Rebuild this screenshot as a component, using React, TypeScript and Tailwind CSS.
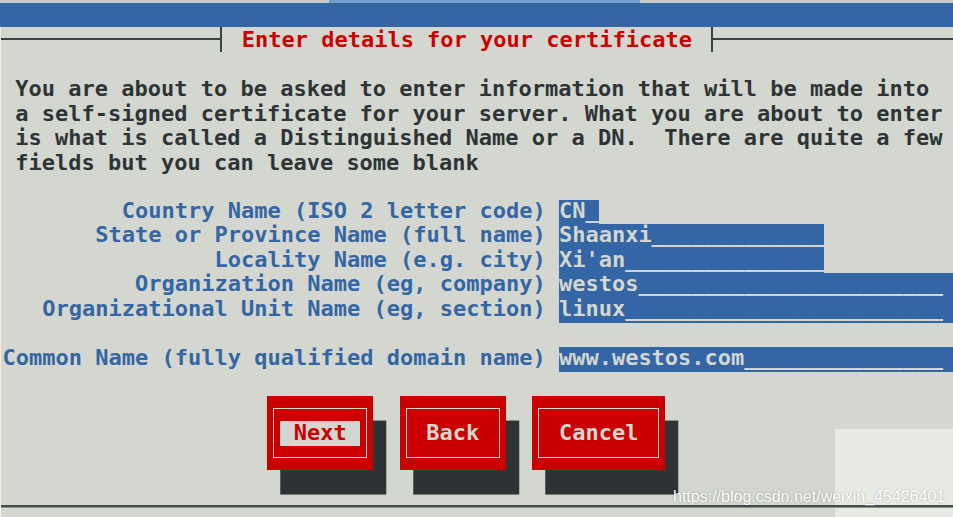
const ROW = "h-[24.55px] leading-[24.55px]";
const FIELD_ROW = "h-[24.55px] pb-[2px] leading-[22.55px]";

const FIELDS = [
  { label: "Country Name (ISO 2 letter code)", value: "CN_", wide: false },
  { label: "State or Province Name (full name)", value: "Shaanxi" + "_".repeat(13), wide: false },
  { label: "Locality Name (e.g. city)", value: "Xi'an" + "_".repeat(15), wide: false },
  { label: "Organization Name (eg, company)", value: "westos" + "_".repeat(23), wide: true },
  { label: "Organizational Unit Name (eg, section)", value: "linux" + "_".repeat(24), wide: true },
];

const INTRO = [
  "You are about to be asked to enter information that will be made into",
  "a self-signed certificate for your server. What you are about to enter",
  "is what is called a Distinguished Name or a DN.  There are quite a few",
  "fields but you can leave some blank",
];

function FieldRow({ label, value, wide }: { label: string; value: string; wide: boolean }) {
  return (
    <div className="flex h-[24.55px] whitespace-pre">
      <span className={`w-[543.66px] shrink-0 text-right text-[#3465a4] ${FIELD_ROW}`}>{label}</span>
      <span
        className={`ml-[13.26px] shrink-0 bg-[#3465a4] text-[#d3d7cf] ${FIELD_ROW} ${wide ? "flex-1" : ""}`}
      >
        {value}
      </span>
    </div>
  );
}

function Button({ label, width, focused }: { label: string; width: string; focused?: boolean }) {
  return (
    <div
      className={`${width} flex h-[73.65px] shrink-0 flex-col bg-[#cc0000] px-[6px] pt-[12px] pb-[11.5px] shadow-[13.26px_24.55px_0_0_#2e3436]`}
    >
      <div className="flex flex-1 items-center justify-center border border-[#d3d7cf]">
        {focused ? (
          <span className={`w-[79.56px] bg-[#d3d7cf] text-center text-[#cc0000] ${ROW}`}>{label}</span>
        ) : (
          <span className={`text-[#d3d7cf] ${ROW}`}>{label}</span>
        )}
      </div>
    </div>
  );
}

export default function App() {
  return (
    <div className="relative h-[517px] w-[953px] overflow-hidden bg-[#d3d7cf] font-['DejaVu_Sans_Mono',monospace] text-[22px] font-bold text-[#2e3436]">
      {/* pale patch behind the watermark */}
      <div className="absolute top-[429px] right-0 bottom-0 left-[835px] bg-[#e8ebe4]" />

      {/* window strip */}
      <div className="h-[3px] bg-[#c8cac5]">
        <div className="ml-[329px] h-full w-[311px] bg-[#729fcf]" />
      </div>
      <div className="h-[24px] bg-[#3465a4]" />

      <div className="border-l border-[#f2f2dc]">
        {/* title */}
        <div className={`flex items-center ${ROW}`}>
          <div className="h-[2px] w-[219px] bg-[#3d4243]" />
          <div className="w-[2px] self-stretch bg-[#3d4243]" />
          <span className="relative top-[1px] ml-[19.7px] w-[450.8px] shrink-0 whitespace-pre text-[#cc0000]">
            Enter details for your certificate
          </span>
          <div className="ml-[18.9px] w-[2px] self-stretch bg-[#3d4243]" />
          <div className="h-[2px] flex-1 bg-[#3d4243]" />
        </div>

        <div className="pl-[1px]">
          <div className="h-[25.55px]" />

          {/* intro */}
          <div className="pl-[13.26px] whitespace-pre">
            {INTRO.map((line) => (
              <div key={line} className={ROW}>
                {line}
              </div>
            ))}
          </div>

          <div className={ROW} />

          {FIELDS.map((f) => (
            <FieldRow key={f.label} label={f.label} value={f.value} wide={f.wide} />
          ))}

          <div className={ROW} />
          <FieldRow
            label="Common Name (fully qualified domain name)"
            value={"www.westos.com" + "_".repeat(15)}
            wide
          />
          <div className={ROW} />

          {/* buttons */}
          <div className="flex gap-[26.52px] pl-[265.2px]">
            <Button label="Next" width="w-[106.08px]" focused />
            <Button label="Back" width="w-[106.08px]" />
            <Button label="Cancel" width="w-[132.6px]" />
          </div>

          <div className={ROW} />
        </div>

        {/* bottom rule */}
        <div className={`relative flex items-center ${ROW}`}>
          <div className="h-[3px] w-full border-b border-[#8d918d] bg-[#474c4c]" />
        </div>
      </div>

      <div className="absolute top-[488px] left-[673px] font-['Liberation_Sans',Arial,sans-serif] text-[16px] leading-[18px] font-normal text-white [text-shadow:0_0_2px_rgba(0,0,0,0.35)]">
        https://blog.csdn.net/weixin_45426401
      </div>
    </div>
  );
}
